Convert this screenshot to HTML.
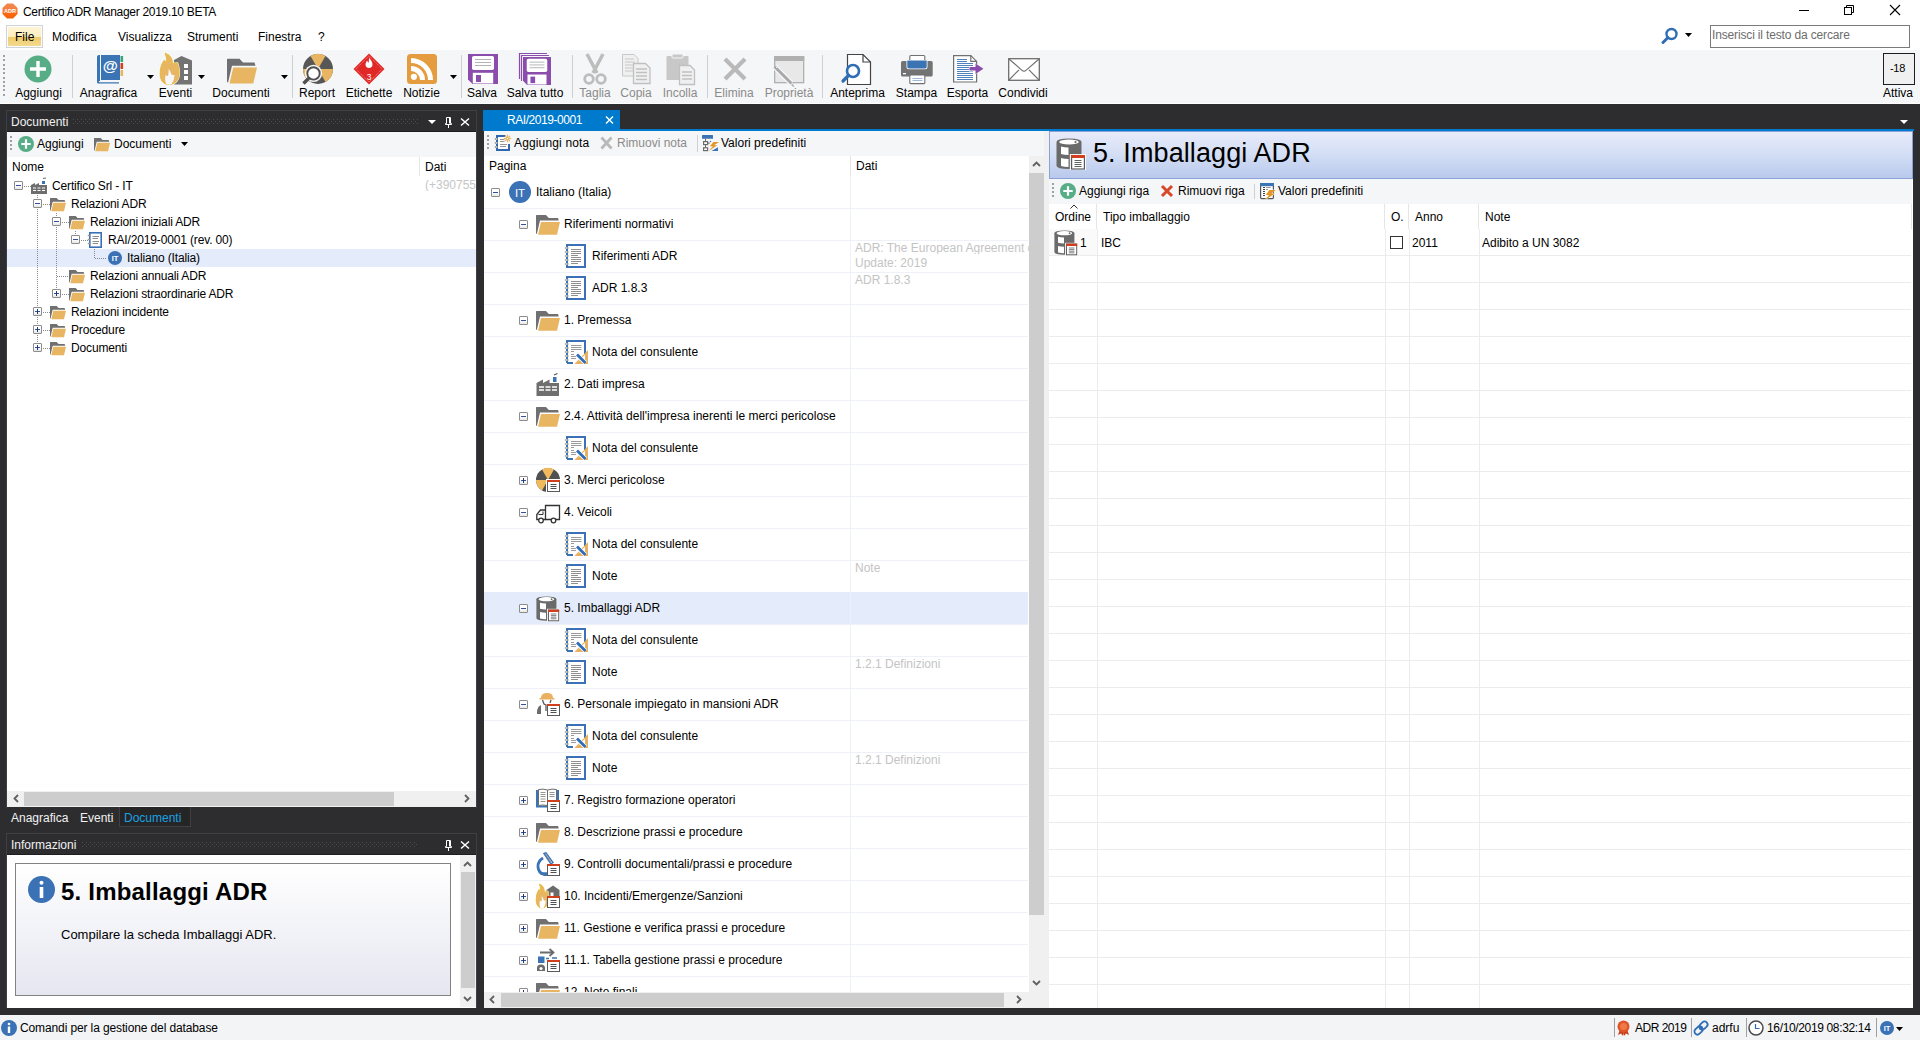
<!DOCTYPE html>
<html><head><meta charset="utf-8"><title>Certifico ADR Manager</title>
<style>
html,body{margin:0;padding:0}
body{width:1920px;height:1040px;overflow:hidden;position:relative;background:#2d2d30;font-family:"Liberation Sans",sans-serif;font-size:12px}
body div,body svg,body span{position:absolute;box-sizing:content-box}
.t{white-space:nowrap;line-height:1}
svg{overflow:visible}
</style></head><body>
<svg width="0" height="0" style="left:0;top:0"><defs></defs></svg>
<div style="left:0px;top:0px;width:1920px;height:50px;background:#fff"></div>
<svg style="left:2px;top:3px" width="16" height="16" viewBox="0 0 16 16"><defs><linearGradient id="ag" x1="0" y1="0" x2="0" y2="1"><stop offset="0" stop-color="#f08a50"/><stop offset="0.55" stop-color="#f47a3a"/><stop offset="0.6" stop-color="#ff6a10"/><stop offset="1" stop-color="#f06208"/></linearGradient></defs><polygon points="5,0.5 11,0.5 15.5,5 15.5,11 11,15.5 5,15.5 0.5,11 0.5,5" fill="url(#ag)"/><text x="8" y="10" font-size="5.5" font-family="Liberation Sans" font-weight="700" fill="#fff" text-anchor="middle">ADR</text></svg>
<span class="t" style="left:23px;top:5.84px;font-size:12px;color:#000;font-weight:400;letter-spacing:-0.3px">Certifico ADR Manager 2019.10 BETA</span>
<div style="left:1799px;top:10px;width:10px;height:1px;background:#000"></div>
<svg style="left:1843px;top:4px" width="12" height="12" viewBox="0 0 12 12"><rect x="1.5" y="3.5" width="7" height="7" fill="none" stroke="#000"/><path d="M3.5 3.5V1.5H10.5V8.5H8.5" fill="none" stroke="#000"/></svg>
<svg style="left:1889px;top:4px" width="12" height="12" viewBox="0 0 12 12"><path d="M1 1L11 11M11 1L1 11" stroke="#000" stroke-width="1.1"/></svg>
<div style="left:6px;top:25px;width:35px;height:21px;border:1px solid #d0d3d7;box-shadow:inset 0 0 0 1px #fbfcfd;background:linear-gradient(#fef6d8,#fbedbd 52%,#eecb6b 54%,#f4dc94)"></div>
<span class="t" style="left:15px;top:30.84px;font-size:12px;color:#000;font-weight:400;">File</span>
<span class="t" style="left:52px;top:30.84px;font-size:12px;color:#000;font-weight:400;">Modifica</span>
<span class="t" style="left:118px;top:30.84px;font-size:12px;color:#000;font-weight:400;">Visualizza</span>
<span class="t" style="left:187px;top:30.84px;font-size:12px;color:#000;font-weight:400;">Strumenti</span>
<span class="t" style="left:258px;top:30.84px;font-size:12px;color:#000;font-weight:400;">Finestra</span>
<span class="t" style="left:318px;top:30.84px;font-size:12px;color:#000;font-weight:400;">?</span>
<svg style="left:1661px;top:27px" width="18" height="18" viewBox="0 0 18 18"><circle cx="10.5" cy="7" r="5" fill="none" stroke="#2f6db5" stroke-width="2.4"/><path d="M7 10.5L2 15.5" stroke="#2f6db5" stroke-width="3" stroke-linecap="round"/></svg>
<svg style="left:1685px;top:33px" width="7" height="5" viewBox="0 0 7 5"><path d="M0 0H7L3.5 4Z" fill="#000"/></svg>
<div style="left:1710px;top:25px;width:198px;height:21px;border:1px solid #7a7a7a;background:#fff"></div>
<span class="t" style="left:1712px;top:28.84px;font-size:12px;color:#6d6d6d;font-weight:400;letter-spacing:-0.15px">Inserisci il testo da cercare</span>
<div style="left:0px;top:50px;width:1920px;height:53px;background:#f5f6f7"></div>
<div style="left:0px;top:103px;width:1920px;height:1px;background:#fff"></div>
<div style="left:3px;top:55.0px;width:2px;height:2px;background:#a0a0a0"></div>
<div style="left:3px;top:59.3px;width:2px;height:2px;background:#a0a0a0"></div>
<div style="left:3px;top:63.6px;width:2px;height:2px;background:#a0a0a0"></div>
<div style="left:3px;top:67.9px;width:2px;height:2px;background:#a0a0a0"></div>
<div style="left:3px;top:72.2px;width:2px;height:2px;background:#a0a0a0"></div>
<div style="left:3px;top:76.5px;width:2px;height:2px;background:#a0a0a0"></div>
<div style="left:3px;top:80.8px;width:2px;height:2px;background:#a0a0a0"></div>
<div style="left:3px;top:85.1px;width:2px;height:2px;background:#a0a0a0"></div>
<div style="left:3px;top:89.4px;width:2px;height:2px;background:#a0a0a0"></div>
<div style="left:3px;top:93.69999999999999px;width:2px;height:2px;background:#a0a0a0"></div>
<svg style="left:24px;top:55px" width="28" height="28" viewBox="0 0 28 28"><circle cx="14" cy="14" r="13.5" fill="#57ad86"/><path d="M14 6V22M6 14H22" stroke="#fff" stroke-width="3.4"/></svg>
<span class="t" style="left:-21.5px;width:120px;text-align:center;top:86.84px;font-size:12px;color:#000">Aggiungi</span>
<div style="left:72px;top:55px;width:1px;height:43px;background:#cdd0d4"></div>
<svg style="left:96px;top:54px" width="30" height="32" viewBox="0 0 30 32"><path d="M1 3Q1 1 3 1H4V27H1Z" fill="#3b74b4"/><rect x="5" y="1" width="19" height="25" fill="#3b74b4"/><path d="M1 26V28Q1 29.5 2.5 29.5H23V28.3H4Q2.8 28.3 2.8 27.5V26Z" fill="#3b74b4"/><rect x="24.5" y="2" width="2.6" height="6" fill="#3aa57a"/><rect x="24.5" y="9" width="2.6" height="6" fill="#d9401e"/><rect x="24.5" y="16" width="2.6" height="6" fill="#e8b562"/><text x="14.3" y="17" font-size="15.5" font-family="Liberation Sans" font-weight="700" fill="#fff" text-anchor="middle">@</text></svg>
<span class="t" style="left:48.5px;width:120px;text-align:center;top:86.84px;font-size:12px;color:#000">Anagrafica</span>
<svg style="left:147px;top:75px" width="7" height="4" viewBox="0 0 7 4"><path d="M0 0H7L3.5 4Z" fill="#000"/></svg>
<svg style="left:156px;top:50px" width="40" height="38" viewBox="0 0 40 38"><path d="M18 10L25.5 6L36 10.5V34.5H18Z" fill="#737373"/><rect x="28" y="14" width="4" height="4" fill="#fff"/><rect x="28" y="20" width="4" height="4" fill="#fff"/><rect x="28" y="26" width="4" height="4" fill="#fff"/><path d="M9 3Q17 6 16.5 13.5Q19 13 21.5 13Q24 20 23 26Q22 32 15.5 34.5L10.5 34.5Q4 32 4 24Q4 15 8.5 10Q9.5 12 10.5 12.5Q11 8 9 3Z" fill="#e8b562" stroke="#f5f6f7" stroke-width="1.6" paint-order="stroke"/><path d="M9 3Q17 6 16.5 13.5Q19 13 21.5 13Q24 20 23 26Q22 32 15.5 34.5L10.5 34.5Q4 32 4 24Q4 15 8.5 10Q9.5 12 10.5 12.5Q11 8 9 3Z" fill="#e8b562" stroke="#e9c020" stroke-width="0.6"/><path d="M12.5 19Q15 21 15.5 24.5Q17 25 18.5 25Q18.5 30 15.5 34.5L10.5 34.5Q8.5 31 9.5 25Q11 26 12 26Q13 22 12.5 19Z" fill="#f5f6f7"/></svg>
<span class="t" style="left:115.5px;width:120px;text-align:center;top:86.84px;font-size:12px;color:#000">Eventi</span>
<svg style="left:198px;top:75px" width="7" height="4" viewBox="0 0 7 4"><path d="M0 0H7L3.5 4Z" fill="#000"/></svg>
<svg style="left:227px;top:55px" width="32" height="30" viewBox="0 0 32 30"><g transform="scale(1.25)"><path d="M0 3.5Q0 3 0.6 3H10L12.8 6H22L22.8 8.6H4L0.9 21.8H0Z" fill="#707070"/><path d="M5 10H24L21 22.8H2Z" fill="#e8b562"/></g></svg>
<span class="t" style="left:181px;width:120px;text-align:center;top:86.84px;font-size:12px;color:#000">Documenti</span>
<svg style="left:281px;top:75px" width="7" height="4" viewBox="0 0 7 4"><path d="M0 0H7L3.5 4Z" fill="#000"/></svg>
<div style="left:292px;top:55px;width:1px;height:43px;background:#cdd0d4"></div>
<svg style="left:302px;top:54px" width="32" height="32" viewBox="0 0 32 32"><circle cx="16" cy="15" r="15" fill="#575757"/><path d="M16 15L8.5 2A15 15 0 0 1 23.5 2Z" fill="#e8b562"/><path d="M16 15L31 15A15 15 0 0 1 23.5 28Z" fill="#e8b562"/><path d="M16 15L8.5 28A15 15 0 0 1 1 15Z" fill="#e8b562"/><circle cx="11.5" cy="19.4" r="8.6" fill="#f5f6f7"/><circle cx="11.5" cy="19.4" r="6.2" fill="#fff" stroke="#505050" stroke-width="1.9"/><path d="M6.8 24.2L1.5 29.5" stroke="#505050" stroke-width="3.4"/></svg>
<span class="t" style="left:257px;width:120px;text-align:center;top:86.84px;font-size:12px;color:#000">Report</span>
<svg style="left:353px;top:53px" width="32" height="32" viewBox="0 0 32 32"><path d="M16 0.5L31.5 16L16 31.5L0.5 16Z" fill="#e02826"/><path d="M16 2.8L29.2 16L16 29.2L2.8 16Z" fill="none" stroke="#fff" stroke-width="0.6" stroke-dasharray="1 1" opacity="0.8"/><path d="M16 4.5C17.5 7 19.5 8.5 19.5 11.5C19.5 13.5 18 15 16 15C14 15 12.5 13.5 12.5 11.5C12.5 10 13.5 9 14 7.5C14.8 8.5 15 9.5 15.3 10C16 8.5 16 6.5 16 4.5Z" fill="#fff"/><text x="16" y="27" font-size="8.5" font-family="Liberation Sans" fill="#fff" text-anchor="middle">3</text></svg>
<span class="t" style="left:309px;width:120px;text-align:center;top:86.84px;font-size:12px;color:#000">Etichette</span>
<svg style="left:407px;top:54px" width="30" height="30" viewBox="0 0 30 30"><rect x="0" y="0" width="30" height="30" rx="3.5" fill="#e59c3f"/><circle cx="6.9" cy="22.8" r="3.1" fill="#fff"/><path d="M4 12A14 14 0 0 1 18 26H13A9 9 0 0 0 4 17Z" fill="#fff"/><path d="M4 4A22 22 0 0 1 26 26H21A17 17 0 0 0 4 9Z" fill="#fff"/></svg>
<span class="t" style="left:361.5px;width:120px;text-align:center;top:86.84px;font-size:12px;color:#000">Notizie</span>
<svg style="left:450px;top:75px" width="7" height="4" viewBox="0 0 7 4"><path d="M0 0H7L3.5 4Z" fill="#000"/></svg>
<div style="left:461px;top:55px;width:1px;height:43px;background:#cdd0d4"></div>
<svg style="left:468px;top:54px" width="30" height="30" viewBox="0 0 30 30"><path d="M0 0H30V30H4.5L0 25.5Z" fill="#8a4dab"/><rect x="4" y="2" width="22" height="14" rx="1.8" fill="#fff"/><path d="M7 5.5H23M7 8.5H23M7 11.5H23" stroke="#b3b3b3" stroke-width="1"/><rect x="4.8" y="18.8" width="20.4" height="10.7" fill="#fff"/><rect x="8" y="21" width="5" height="7" fill="#8a4dab"/></svg>
<span class="t" style="left:422px;width:120px;text-align:center;top:86.84px;font-size:12px;color:#000">Salva</span>
<svg style="left:514px;top:50px" width="40" height="38" viewBox="0 0 40 38"><path d="M5.5 28.5V3.5H32.5" fill="none" stroke="#8a4dab" stroke-width="1.2" stroke-linecap="round"/><path d="M7.5 30.5V5.5H34.5" fill="none" stroke="#8a4dab" stroke-width="1.2" stroke-linecap="round"/><g transform="translate(9,7) scale(0.933)"><path d="M0 0H30V30H4.5L0 25.5Z" fill="#8a4dab"/><rect x="4" y="2" width="22" height="14" rx="1.8" fill="#fff"/><path d="M7 5.5H23M7 8.5H23M7 11.5H23" stroke="#b3b3b3" stroke-width="1"/><rect x="4.8" y="18.8" width="20.4" height="10.7" fill="#fff"/><rect x="8" y="21" width="5" height="7" fill="#8a4dab"/></g></svg>
<span class="t" style="left:475px;width:120px;text-align:center;top:86.84px;font-size:12px;color:#000">Salva tutto</span>
<div style="left:572px;top:55px;width:1px;height:43px;background:#cdd0d4"></div>
<svg style="left:584px;top:54px" width="22" height="31" viewBox="0 0 22 31"><path d="M3 0L13 19M19 0L9 19" stroke="#bdbdbd" stroke-width="3.5"/><circle cx="5" cy="25" r="4.3" fill="none" stroke="#bdbdbd" stroke-width="2.8"/><circle cx="17" cy="25" r="4.3" fill="none" stroke="#bdbdbd" stroke-width="2.8"/></svg>
<span class="t" style="left:535px;width:120px;text-align:center;top:86.84px;font-size:12px;color:#8b8b8b">Taglia</span>
<svg style="left:622px;top:54px" width="30" height="30" viewBox="0 0 30 30"><path d="M0.5 0.5H12L16 4.5V22H0.5Z" fill="#f0f0f0" stroke="#c8c8c8"/><path d="M3 5H12M3 8H13M3 11H13M3 14H13M3 17H13" stroke="#c8c8c8"/><path d="M11.5 9.5H23.5L28 14V29.5H11.5Z" fill="#f0f0f0" stroke="#c0c0c0" stroke-width="1.3"/><path d="M14 15H25M14 18.5H25M14 22H25M14 25.5H25" stroke="#c0c0c0" stroke-width="1.3"/></svg>
<span class="t" style="left:576px;width:120px;text-align:center;top:86.84px;font-size:12px;color:#8b8b8b">Copia</span>
<svg style="left:666px;top:53px" width="30" height="32" viewBox="0 0 30 32"><rect x="0.5" y="3" width="22" height="24" rx="1" fill="#c8c8c8"/><rect x="6" y="1" width="11" height="4" rx="1" fill="#c8c8c8" stroke="#f5f6f7" stroke-width="1"/><path d="M13.5 12.5H24L28.5 17V31.5H13.5Z" fill="#f0f0f0" stroke="#c0c0c0" stroke-width="1.3"/><path d="M16 19H26M16 22.5H26M16 26H26" stroke="#c0c0c0" stroke-width="1.3"/></svg>
<span class="t" style="left:620px;width:120px;text-align:center;top:86.84px;font-size:12px;color:#8b8b8b">Incolla</span>
<div style="left:707px;top:55px;width:1px;height:43px;background:#cdd0d4"></div>
<svg style="left:723px;top:57px" width="24" height="24" viewBox="0 0 24 24"><path d="M2 2L22 22M22 2L2 22" stroke="#b9b9b9" stroke-width="4.2"/></svg>
<span class="t" style="left:674px;width:120px;text-align:center;top:86.84px;font-size:12px;color:#8b8b8b">Elimina</span>
<svg style="left:772px;top:54px" width="34" height="34" viewBox="0 0 34 34"><rect x="2.7" y="2.7" width="29" height="26" fill="#e8e8e8" stroke="#ababab" stroke-width="1.2"/><rect x="2.2" y="2.2" width="30" height="4.8" fill="#b0b0b0"/><path d="M2.5 12.5L19.5 29.5" stroke="#f5f6f7" stroke-width="5.5"/><path d="M2.5 12.5L19.5 29.5" stroke="#a8a8a8" stroke-width="3"/><path d="M4 14L5.5 12.5" stroke="#f5f6f7" stroke-width="1"/><path d="M19 31L22.5 33.5L21 30Z" fill="#a8a8a8"/></svg>
<span class="t" style="left:729px;width:120px;text-align:center;top:86.84px;font-size:12px;color:#8b8b8b">Proprietà</span>
<div style="left:822px;top:55px;width:1px;height:43px;background:#cdd0d4"></div>
<svg style="left:840px;top:53px" width="32" height="33" viewBox="0 0 32 33"><path d="M7.5 1.5H23L30.5 9V31.5H7.5Z" fill="#fff" stroke="#444" stroke-width="1.2"/><path d="M23 1.5V9H30.5" fill="none" stroke="#444" stroke-width="1.2"/><circle cx="13" cy="18" r="6" fill="#fff" stroke="#2f6db5" stroke-width="2.6"/><path d="M8.5 22.5L3 28" stroke="#2f6db5" stroke-width="3.2" stroke-linecap="round"/></svg>
<span class="t" style="left:797.5px;width:120px;text-align:center;top:86.84px;font-size:12px;color:#000">Anteprima</span>
<svg style="left:900px;top:54px" width="34" height="31" viewBox="0 0 34 31"><rect x="9.8" y="1.5" width="15" height="8" rx="1" fill="#fff" stroke="#707070" stroke-width="1.1"/><rect x="1" y="7" width="31.7" height="15.6" rx="1.6" fill="#737373"/><path d="M6.5 6H27.5V13Q27.5 15.3 25.2 15.3H8.8Q6.5 15.3 6.5 13Z" fill="#fff"/><path d="M7.3 6.5H26.7V12.8Q26.7 14.5 25 14.5H9Q7.3 14.5 7.3 12.8Z" fill="#3b74b4"/><rect x="3" y="19" width="3" height="1.3" fill="#fff"/><rect x="9.8" y="21" width="15" height="8.6" rx="0.8" fill="#fff" stroke="#707070" stroke-width="1.1"/><path d="M12.5 24.5H22.5M12.5 26.5H22.5" stroke="#8fb0d8" stroke-width="0.9"/></svg>
<span class="t" style="left:856.5px;width:120px;text-align:center;top:86.84px;font-size:12px;color:#000">Stampa</span>
<svg style="left:952px;top:54px" width="34" height="31" viewBox="0 0 34 31"><path d="M1.6 1.6H18.8L24.6 7.4V28H1.6Z" fill="#fff" stroke="#707070" stroke-width="1.2"/><path d="M18.8 1.6V7.4H24.6" fill="none" stroke="#707070" stroke-width="1.2"/><path d="M5 5.5H15M5 7.5H15M5 9.5H21M5 11.5H21M5 13.5H21M5 15.5H21M5 17.5H21M5 19.5H21M5 21.5H21M5 23.5H21M5 25.5H21" stroke="#3b74b4" stroke-width="0.9"/><path d="M17 12.2H23V9L32.5 14.8L23 20.5V17.5H17Z" fill="#fff"/><path d="M17.5 13H23.5V9.5L31.5 14.8L23.5 20V16.5H17.5Z" fill="#8a4dab"/></svg>
<span class="t" style="left:907.5px;width:120px;text-align:center;top:86.84px;font-size:12px;color:#000">Esporta</span>
<svg style="left:1007px;top:57px" width="34" height="26" viewBox="0 0 34 26"><rect x="1.7" y="1.7" width="30.6" height="21.6" fill="#fff" stroke="#6e6e6e" stroke-width="1.3"/><path d="M2 2L15 13.3Q17 15 19 13.3L32 2M2 23L12 12.8M32 23L22 12.8" fill="none" stroke="#6e6e6e" stroke-width="1.1"/></svg>
<span class="t" style="left:963px;width:120px;text-align:center;top:86.84px;font-size:12px;color:#000">Condividi</span>
<div style="left:1883px;top:53px;width:30px;height:30px;border:1px solid #1e1e1e;background:#f0f0f0"></div>
<span class="t" style="left:1890px;top:62.69px;font-size:11px;color:#000;font-weight:400;letter-spacing:-0.3px">-18</span>
<span class="t" style="left:1838px;width:120px;text-align:center;top:86.84px;font-size:12px;color:#000">Attiva</span>
<div style="left:0px;top:104px;width:1920px;height:911px;background:#2d2d30"></div>
<div style="left:6px;top:110px;width:469px;height:21px;border:1px solid #3f3f46;border-bottom:none;background:#2d2d30"></div>
<span class="t" style="left:11px;top:115.84px;font-size:12px;color:#f1f1f1;font-weight:400;">Documenti</span>
<div style="left:73px;top:119px;width:345px;height:1px;background:repeating-linear-gradient(to right,transparent 0 0px,#4c4c51 0px 1px,transparent 1px 4px)"></div>
<div style="left:73px;top:121px;width:345px;height:1px;background:repeating-linear-gradient(to right,transparent 0 2px,#4c4c51 2px 3px,transparent 3px 4px)"></div>
<div style="left:73px;top:123px;width:345px;height:1px;background:repeating-linear-gradient(to right,transparent 0 0px,#4c4c51 0px 1px,transparent 1px 4px)"></div>
<svg style="left:428px;top:120px" width="8" height="4" viewBox="0 0 8 4"><path d="M0 0H8L4 4Z" fill="#fff"/></svg>
<svg style="left:445px;top:117px" width="7" height="11" viewBox="0 0 7 11"><path d="M1.5 0.5H5.5V6.5H6.5V7.5H0.5V6.5H1.5Z" fill="none" stroke="#fff"/><path d="M3.5 7.5V11" stroke="#fff"/><path d="M4.5 1V6.5" stroke="#fff"/></svg>
<svg style="left:460px;top:118px" width="10" height="8" viewBox="0 0 10 8"><path d="M1 0.5L9 7.5M9 0.5L1 7.5" stroke="#fff" stroke-width="1.5"/></svg>
<div style="left:6px;top:131px;width:1px;height:677px;background:#3f3f46"></div>
<div style="left:476px;top:131px;width:1px;height:677px;background:#3f3f46"></div>
<div style="left:7px;top:131px;width:469px;height:1px;background:#1e1e20"></div>
<div style="left:7px;top:132px;width:469px;height:675px;background:#fff"></div>
<div style="left:7px;top:132px;width:469px;height:25px;background:#f5f6f7"></div>
<div style="left:10px;top:136px;width:2px;height:2px;background:#a0a0a0"></div>
<div style="left:10px;top:140px;width:2px;height:2px;background:#a0a0a0"></div>
<div style="left:10px;top:144px;width:2px;height:2px;background:#a0a0a0"></div>
<div style="left:10px;top:148px;width:2px;height:2px;background:#a0a0a0"></div>
<svg style="left:18px;top:136px" width="16" height="16" viewBox="0 0 16 16"><circle cx="8" cy="8" r="8" fill="#57ad86"/><path d="M8 3.3V12.7M3.3 8H12.7" stroke="#fff" stroke-width="2.2"/></svg>
<span class="t" style="left:37px;top:137.84px;font-size:12px;color:#000;font-weight:400;">Aggiungi</span>
<svg style="left:94px;top:136px" width="16" height="16" viewBox="0 0 16 16"><g transform="translate(0,0) scale(0.667)"><path d="M0 3.5Q0 3 0.6 3H10L12.8 6H22L22.8 8.6H4L0.9 21.8H0Z" fill="#707070"/><path d="M5 10H24L21 22.8H2Z" fill="#e8b562"/></g></svg>
<span class="t" style="left:114px;top:137.84px;font-size:12px;color:#000;font-weight:400;">Documenti</span>
<svg style="left:181px;top:142px" width="7" height="4" viewBox="0 0 7 4"><path d="M0 0H7L3.5 4Z" fill="#000"/></svg>
<span class="t" style="left:12px;top:160.84px;font-size:12px;color:#000;font-weight:400;">Nome</span>
<div style="left:419px;top:157px;width:1px;height:19px;background:#e5e5e5"></div>
<span class="t" style="left:425px;top:160.84px;font-size:12px;color:#000;font-weight:400;">Dati</span>
<div style="left:7px;top:249px;width:469px;height:18px;background:#e4ebfa"></div>
<div style="left:37px;top:195px;width:1px;height:153px;background:repeating-linear-gradient(to bottom,#8a8a8a 0 1px,transparent 1px 2px)"></div>
<div style="left:56px;top:213px;width:1px;height:81px;background:repeating-linear-gradient(to bottom,#8a8a8a 0 1px,transparent 1px 2px)"></div>
<div style="left:75px;top:231px;width:1px;height:9px;background:repeating-linear-gradient(to bottom,#8a8a8a 0 1px,transparent 1px 2px)"></div>
<div style="left:94px;top:249px;width:1px;height:9px;background:repeating-linear-gradient(to bottom,#8a8a8a 0 1px,transparent 1px 2px)"></div>
<div style="left:14px;top:181px;width:7px;height:7px;border:1px solid #8c8c8c;border-radius:1px;background:linear-gradient(#fff,#fff 50%,#e6e6e6)"></div>
<div style="left:16px;top:185px;width:5px;height:1px;background:#3050a0"></div>
<div style="left:24px;top:186px;width:7px;height:1px;background:repeating-linear-gradient(to right,#8a8a8a 0 1px,transparent 1px 2px)"></div>
<svg style="left:31px;top:178px" width="16" height="16" viewBox="0 0 16 16"><path d="M0 7L4 5V7L8 5V7H16V16H0Z" fill="#6e6e6e"/><rect x="11" y="3" width="3" height="3" fill="#3a72b5"/><path d="M12 0.5L15 0" stroke="#6e6e6e" stroke-width="1.2"/><path d="M2 10H5M6.5 10H9.5M11 10H14M2 12.5H5M6.5 12.5H9.5M11 12.5H14" stroke="#fff" stroke-width="1.2"/></svg>
<span class="t" style="left:52px;top:179.84px;font-size:12px;color:#000;font-weight:400;letter-spacing:-0.15px">Certifico Srl - IT</span>
<div style="left:33px;top:199px;width:7px;height:7px;border:1px solid #8c8c8c;border-radius:1px;background:linear-gradient(#fff,#fff 50%,#e6e6e6)"></div>
<div style="left:35px;top:203px;width:5px;height:1px;background:#3050a0"></div>
<div style="left:43px;top:204px;width:7px;height:1px;background:repeating-linear-gradient(to right,#8a8a8a 0 1px,transparent 1px 2px)"></div>
<svg style="left:50px;top:196px" width="16" height="16" viewBox="0 0 16 16"><g transform="translate(0,0) scale(0.667)"><path d="M0 3.5Q0 3 0.6 3H10L12.8 6H22L22.8 8.6H4L0.9 21.8H0Z" fill="#707070"/><path d="M5 10H24L21 22.8H2Z" fill="#e8b562"/></g></svg>
<span class="t" style="left:71px;top:197.84px;font-size:12px;color:#000;font-weight:400;letter-spacing:-0.15px">Relazioni ADR</span>
<div style="left:52px;top:217px;width:7px;height:7px;border:1px solid #8c8c8c;border-radius:1px;background:linear-gradient(#fff,#fff 50%,#e6e6e6)"></div>
<div style="left:54px;top:221px;width:5px;height:1px;background:#3050a0"></div>
<div style="left:62px;top:222px;width:7px;height:1px;background:repeating-linear-gradient(to right,#8a8a8a 0 1px,transparent 1px 2px)"></div>
<svg style="left:69px;top:214px" width="16" height="16" viewBox="0 0 16 16"><g transform="translate(0,0) scale(0.667)"><path d="M0 3.5Q0 3 0.6 3H10L12.8 6H22L22.8 8.6H4L0.9 21.8H0Z" fill="#707070"/><path d="M5 10H24L21 22.8H2Z" fill="#e8b562"/></g></svg>
<span class="t" style="left:90px;top:215.84px;font-size:12px;color:#000;font-weight:400;letter-spacing:-0.15px">Relazioni iniziali ADR</span>
<div style="left:71px;top:235px;width:7px;height:7px;border:1px solid #8c8c8c;border-radius:1px;background:linear-gradient(#fff,#fff 50%,#e6e6e6)"></div>
<div style="left:73px;top:239px;width:5px;height:1px;background:#3050a0"></div>
<div style="left:81px;top:240px;width:7px;height:1px;background:repeating-linear-gradient(to right,#8a8a8a 0 1px,transparent 1px 2px)"></div>
<svg style="left:87px;top:232px" width="15" height="16" viewBox="0 0 15 16"><rect x="2.8" y="0.8" width="11.4" height="14.4" fill="#fff" stroke="#3a72b5" stroke-width="1.6"/><path d="M5.5 4.5H12M5.5 6.5H11M5.5 9.5H12M5.5 11.5H11" stroke="#808080" stroke-width="0.9"/><path d="M0.8 3.5H3.8M0.8 7.5H3.8M0.8 11.5H3.8" stroke="#9a9a9a" stroke-width="1.3"/></svg>
<span class="t" style="left:108px;top:233.84px;font-size:12px;color:#000;font-weight:400;letter-spacing:-0.15px">RAI/2019-0001 (rev. 00)</span>
<div style="left:95px;top:258px;width:11px;height:1px;background:repeating-linear-gradient(to right,#8a8a8a 0 1px,transparent 1px 2px)"></div>
<svg style="left:108px;top:251px" width="14" height="14" viewBox="0 0 14 14"><circle cx="7.0" cy="7.0" r="7.0" fill="#3a72b5"/><text x="7.0" y="9.85" font-size="7.5" font-family="Liberation Sans" fill="#fff" text-anchor="middle" font-weight="700">IT</text></svg>
<span class="t" style="left:127px;top:251.84px;font-size:12px;color:#000;font-weight:400;letter-spacing:-0.15px">Italiano (Italia)</span>
<div style="left:57px;top:276px;width:12px;height:1px;background:repeating-linear-gradient(to right,#8a8a8a 0 1px,transparent 1px 2px)"></div>
<svg style="left:69px;top:268px" width="16" height="16" viewBox="0 0 16 16"><g transform="translate(0,0) scale(0.667)"><path d="M0 3.5Q0 3 0.6 3H10L12.8 6H22L22.8 8.6H4L0.9 21.8H0Z" fill="#707070"/><path d="M5 10H24L21 22.8H2Z" fill="#e8b562"/></g></svg>
<span class="t" style="left:90px;top:269.84px;font-size:12px;color:#000;font-weight:400;letter-spacing:-0.15px">Relazioni annuali ADR</span>
<div style="left:52px;top:289px;width:7px;height:7px;border:1px solid #8c8c8c;border-radius:1px;background:linear-gradient(#fff,#fff 50%,#e6e6e6)"></div>
<div style="left:54px;top:293px;width:5px;height:1px;background:#3050a0"></div>
<div style="left:56px;top:291px;width:1px;height:5px;background:#1e3a78"></div>
<div style="left:62px;top:294px;width:7px;height:1px;background:repeating-linear-gradient(to right,#8a8a8a 0 1px,transparent 1px 2px)"></div>
<svg style="left:69px;top:286px" width="16" height="16" viewBox="0 0 16 16"><g transform="translate(0,0) scale(0.667)"><path d="M0 3.5Q0 3 0.6 3H10L12.8 6H22L22.8 8.6H4L0.9 21.8H0Z" fill="#707070"/><path d="M5 10H24L21 22.8H2Z" fill="#e8b562"/></g></svg>
<span class="t" style="left:90px;top:287.84px;font-size:12px;color:#000;font-weight:400;letter-spacing:-0.15px">Relazioni straordinarie ADR</span>
<div style="left:33px;top:307px;width:7px;height:7px;border:1px solid #8c8c8c;border-radius:1px;background:linear-gradient(#fff,#fff 50%,#e6e6e6)"></div>
<div style="left:35px;top:311px;width:5px;height:1px;background:#3050a0"></div>
<div style="left:37px;top:309px;width:1px;height:5px;background:#1e3a78"></div>
<div style="left:43px;top:312px;width:7px;height:1px;background:repeating-linear-gradient(to right,#8a8a8a 0 1px,transparent 1px 2px)"></div>
<svg style="left:50px;top:304px" width="16" height="16" viewBox="0 0 16 16"><g transform="translate(0,0) scale(0.667)"><path d="M0 3.5Q0 3 0.6 3H10L12.8 6H22L22.8 8.6H4L0.9 21.8H0Z" fill="#707070"/><path d="M5 10H24L21 22.8H2Z" fill="#e8b562"/></g></svg>
<span class="t" style="left:71px;top:305.84px;font-size:12px;color:#000;font-weight:400;letter-spacing:-0.15px">Relazioni incidente</span>
<div style="left:33px;top:325px;width:7px;height:7px;border:1px solid #8c8c8c;border-radius:1px;background:linear-gradient(#fff,#fff 50%,#e6e6e6)"></div>
<div style="left:35px;top:329px;width:5px;height:1px;background:#3050a0"></div>
<div style="left:37px;top:327px;width:1px;height:5px;background:#1e3a78"></div>
<div style="left:43px;top:330px;width:7px;height:1px;background:repeating-linear-gradient(to right,#8a8a8a 0 1px,transparent 1px 2px)"></div>
<svg style="left:50px;top:322px" width="16" height="16" viewBox="0 0 16 16"><g transform="translate(0,0) scale(0.667)"><path d="M0 3.5Q0 3 0.6 3H10L12.8 6H22L22.8 8.6H4L0.9 21.8H0Z" fill="#707070"/><path d="M5 10H24L21 22.8H2Z" fill="#e8b562"/></g></svg>
<span class="t" style="left:71px;top:323.84px;font-size:12px;color:#000;font-weight:400;letter-spacing:-0.15px">Procedure</span>
<div style="left:33px;top:343px;width:7px;height:7px;border:1px solid #8c8c8c;border-radius:1px;background:linear-gradient(#fff,#fff 50%,#e6e6e6)"></div>
<div style="left:35px;top:347px;width:5px;height:1px;background:#3050a0"></div>
<div style="left:37px;top:345px;width:1px;height:5px;background:#1e3a78"></div>
<div style="left:43px;top:348px;width:7px;height:1px;background:repeating-linear-gradient(to right,#8a8a8a 0 1px,transparent 1px 2px)"></div>
<svg style="left:50px;top:340px" width="16" height="16" viewBox="0 0 16 16"><g transform="translate(0,0) scale(0.667)"><path d="M0 3.5Q0 3 0.6 3H10L12.8 6H22L22.8 8.6H4L0.9 21.8H0Z" fill="#707070"/><path d="M5 10H24L21 22.8H2Z" fill="#e8b562"/></g></svg>
<span class="t" style="left:71px;top:341.84px;font-size:12px;color:#000;font-weight:400;letter-spacing:-0.15px">Documenti</span>
<span class="t" style="left:425px;top:178.84px;width:51px;overflow:hidden;font-size:12px;color:#c6c6c6">(+3907559</span>
<div style="left:7px;top:791px;width:469px;height:16px;background:#f0f0f0"></div>
<div style="left:24px;top:792px;width:370px;height:14px;background:#cdcdcd"></div>
<svg style="left:13px;top:794px" width="6" height="9" viewBox="0 0 6 9"><path d="M5 1L1.5 4.5L5 8" fill="none" stroke="#606060" stroke-width="1.8"/></svg>
<svg style="left:464px;top:794px" width="6" height="9" viewBox="0 0 6 9"><path d="M1 1L4.5 4.5L1 8" fill="none" stroke="#606060" stroke-width="1.8"/></svg>
<div style="left:119px;top:807px;width:70px;height:19px;border:1px solid #3f3f46;border-top:none;background:#252526"></div>
<span class="t" style="left:11px;top:811.84px;font-size:12px;color:#f1f1f1;font-weight:400;">Anagrafica</span>
<span class="t" style="left:80px;top:811.84px;font-size:12px;color:#f1f1f1;font-weight:400;">Eventi</span>
<span class="t" style="left:124px;top:811.84px;font-size:12px;color:#1ba1e2;font-weight:400;">Documenti</span>
<div style="left:6px;top:833px;width:469px;height:21px;border:1px solid #3f3f46;border-bottom:none;background:#2d2d30"></div>
<span class="t" style="left:11px;top:838.84px;font-size:12px;color:#f1f1f1;font-weight:400;">Informazioni</span>
<div style="left:82px;top:842px;width:336px;height:1px;background:repeating-linear-gradient(to right,transparent 0 0px,#4c4c51 0px 1px,transparent 1px 4px)"></div>
<div style="left:82px;top:844px;width:336px;height:1px;background:repeating-linear-gradient(to right,transparent 0 2px,#4c4c51 2px 3px,transparent 3px 4px)"></div>
<div style="left:82px;top:846px;width:336px;height:1px;background:repeating-linear-gradient(to right,transparent 0 0px,#4c4c51 0px 1px,transparent 1px 4px)"></div>
<svg style="left:445px;top:840px" width="7" height="11" viewBox="0 0 7 11"><path d="M1.5 0.5H5.5V6.5H6.5V7.5H0.5V6.5H1.5Z" fill="none" stroke="#fff"/><path d="M3.5 7.5V11" stroke="#fff"/><path d="M4.5 1V6.5" stroke="#fff"/></svg>
<svg style="left:460px;top:841px" width="10" height="8" viewBox="0 0 10 8"><path d="M1 0.5L9 7.5M9 0.5L1 7.5" stroke="#fff" stroke-width="1.5"/></svg>
<div style="left:6px;top:854px;width:1px;height:154px;background:#3f3f46"></div>
<div style="left:476px;top:854px;width:1px;height:154px;background:#3f3f46"></div>
<div style="left:7px;top:854px;width:469px;height:1px;background:#1e1e20"></div>
<div style="left:7px;top:855px;width:469px;height:153px;background:#fff"></div>
<div style="left:15px;top:863px;width:434px;height:131px;border:1px solid #828282;background:linear-gradient(#fff,#e5e6f0)"></div>
<svg style="left:28px;top:876px" width="27" height="27" viewBox="0 0 27 27"><circle cx="13.5" cy="13.5" r="13.5" fill="#3a72b5"/><rect x="11.7" y="11" width="3.6" height="11" fill="#fff"/><circle cx="13.5" cy="6.8" r="2" fill="#fff"/></svg>
<span class="t" style="left:61px;top:879.68px;font-size:24px;color:#000;font-weight:700;letter-spacing:0.2px">5. Imballaggi ADR</span>
<span class="t" style="left:61px;top:928.0px;font-size:13px;color:#000;font-weight:400;">Compilare la scheda Imballaggi ADR.</span>
<div style="left:460px;top:855px;width:16px;height:152px;background:#f0f0f0"></div>
<div style="left:461px;top:872px;width:14px;height:116px;background:#cdcdcd"></div>
<svg style="left:463px;top:861px" width="9" height="6" viewBox="0 0 9 6"><path d="M1 5L4.5 1.5L8 5" fill="none" stroke="#606060" stroke-width="1.8"/></svg>
<svg style="left:463px;top:996px" width="9" height="6" viewBox="0 0 9 6"><path d="M1 1L4.5 4.5L8 1" fill="none" stroke="#606060" stroke-width="1.8"/></svg>
<div style="left:483px;top:110px;width:137px;height:19px;background:#007acc"></div>
<span class="t" style="left:507px;top:113.84px;font-size:12px;color:#fff;font-weight:400;letter-spacing:-0.45px">RAI/2019-0001</span>
<svg style="left:605px;top:116px" width="9" height="8" viewBox="0 0 9 8"><path d="M1 0.5L8 7.5M8 0.5L1 7.5" stroke="#fff" stroke-width="1.4"/></svg>
<div style="left:483px;top:129px;width:1431px;height:2px;background:#007acc"></div>
<svg style="left:1900px;top:120px" width="8" height="4" viewBox="0 0 8 4"><path d="M0 0H8L4 4Z" fill="#fff"/></svg>
<div style="left:484px;top:131px;width:1429px;height:877px;background:#fff"></div>
<div style="left:484px;top:131px;width:560px;height:25px;background:#f5f6f7"></div>
<div style="left:487px;top:135px;width:2px;height:2px;background:#a0a0a0"></div>
<div style="left:487px;top:139px;width:2px;height:2px;background:#a0a0a0"></div>
<div style="left:487px;top:143px;width:2px;height:2px;background:#a0a0a0"></div>
<div style="left:487px;top:147px;width:2px;height:2px;background:#a0a0a0"></div>
<svg style="left:494px;top:134px" width="18" height="18" viewBox="0 0 18 18"><path d="M11.5 2H3V16H15V10" fill="#fff" stroke="#3068b0" stroke-width="2"/><path d="M0.8 5H4M0.8 9H4M0.8 13H4" stroke="#8a8a8a" stroke-width="1.4"/><path d="M2 5H3M2 9H3M2 13H3" stroke="#fff" stroke-width="1"/><path d="M6 5.5H10.5M6 7.5H10.5M6 10.5H13M6 12.5H12" stroke="#8a8a8a" stroke-width="0.9"/><path d="M13.5 0.8V8.2M9.8 4.5H17.2M10.9 1.9L16.1 7.1M16.1 1.9L10.9 7.1" stroke="#e8b562" stroke-width="1.2"/><circle cx="13.5" cy="4.5" r="1.8" fill="#e8b562"/><circle cx="13.5" cy="4.5" r="0.7" fill="#fff"/></svg>
<span class="t" style="left:514px;top:136.84px;font-size:12px;color:#000;font-weight:400;letter-spacing:0.15px">Aggiungi nota</span>
<svg style="left:600px;top:136px" width="13" height="14" viewBox="0 0 13 14"><path d="M1.5 1.5L11.5 12.5M11.5 1.5L1.5 12.5" stroke="#b9b9b9" stroke-width="2.8"/></svg>
<span class="t" style="left:617px;top:136.84px;font-size:12px;color:#8b8b8b;font-weight:400;">Rimuovi nota</span>
<div style="left:697px;top:135px;width:1px;height:17px;background:#cdd0d4"></div>
<svg style="left:701px;top:134px" width="18" height="18" viewBox="0 0 18 18"><rect x="1" y="1" width="11" height="3.8" rx="0.5" fill="#3b74b4"/><path d="M4.5 4.8V7.6M4.5 10.6V13.8M6.8 9.1H8.8" stroke="#6b6b6b" stroke-width="1"/><rect x="2.6" y="7.6" width="4" height="3" fill="#fff" stroke="#6b6b6b" stroke-width="1.2"/><rect x="2.6" y="13.8" width="4" height="2.8" fill="#fff" stroke="#6b6b6b" stroke-width="1.2"/><circle cx="9.5" cy="7.5" r="0.7" fill="#3b74b4"/><path d="M10.5 17H17V13.2Z" fill="#3b74b4"/><path d="M18 8H12.5L8.8 12.3H12L7.6 17L16.3 11.3H13Z" fill="#e39422"/></svg>
<span class="t" style="left:721px;top:136.84px;font-size:12px;color:#000;font-weight:400;">Valori predefiniti</span>
<span class="t" style="left:489px;top:159.84px;font-size:12px;color:#000;font-weight:400;">Pagina</span>
<div style="left:850px;top:156px;width:1px;height:20px;background:#e5e5e5"></div>
<span class="t" style="left:856px;top:159.84px;font-size:12px;color:#000;font-weight:400;">Dati</span>
<div style="left:484px;top:208px;width:544px;height:1px;background:#eef2f8"></div>
<div style="left:484px;top:240px;width:544px;height:1px;background:#eef2f8"></div>
<div style="left:484px;top:272px;width:544px;height:1px;background:#eef2f8"></div>
<div style="left:484px;top:304px;width:544px;height:1px;background:#eef2f8"></div>
<div style="left:484px;top:336px;width:544px;height:1px;background:#eef2f8"></div>
<div style="left:484px;top:368px;width:544px;height:1px;background:#eef2f8"></div>
<div style="left:484px;top:400px;width:544px;height:1px;background:#eef2f8"></div>
<div style="left:484px;top:432px;width:544px;height:1px;background:#eef2f8"></div>
<div style="left:484px;top:464px;width:544px;height:1px;background:#eef2f8"></div>
<div style="left:484px;top:496px;width:544px;height:1px;background:#eef2f8"></div>
<div style="left:484px;top:528px;width:544px;height:1px;background:#eef2f8"></div>
<div style="left:484px;top:560px;width:544px;height:1px;background:#eef2f8"></div>
<div style="left:484px;top:592px;width:544px;height:1px;background:#eef2f8"></div>
<div style="left:484px;top:624px;width:544px;height:1px;background:#eef2f8"></div>
<div style="left:484px;top:656px;width:544px;height:1px;background:#eef2f8"></div>
<div style="left:484px;top:688px;width:544px;height:1px;background:#eef2f8"></div>
<div style="left:484px;top:720px;width:544px;height:1px;background:#eef2f8"></div>
<div style="left:484px;top:752px;width:544px;height:1px;background:#eef2f8"></div>
<div style="left:484px;top:784px;width:544px;height:1px;background:#eef2f8"></div>
<div style="left:484px;top:816px;width:544px;height:1px;background:#eef2f8"></div>
<div style="left:484px;top:848px;width:544px;height:1px;background:#eef2f8"></div>
<div style="left:484px;top:880px;width:544px;height:1px;background:#eef2f8"></div>
<div style="left:484px;top:912px;width:544px;height:1px;background:#eef2f8"></div>
<div style="left:484px;top:944px;width:544px;height:1px;background:#eef2f8"></div>
<div style="left:484px;top:976px;width:544px;height:1px;background:#eef2f8"></div>
<div style="left:484px;top:592px;width:544px;height:32px;background:#e4ebfa"></div>
<div style="left:850px;top:176px;width:1px;height:816px;background:#eef2f8"></div>
<div style="left:484px;top:176px;width:545px;height:816px;overflow:hidden">
<div style="left:7px;top:12px;width:7px;height:7px;border:1px solid #8c8c8c;border-radius:1px;background:linear-gradient(#fff,#fff 50%,#e6e6e6)"></div>
<div style="left:9px;top:16px;width:5px;height:1px;background:#3050a0"></div>
<svg style="left:24px;top:4px" width="24" height="24" viewBox="0 0 24 24"><circle cx="12" cy="12" r="11" fill="#3a72b5"/><text x="12" y="16.5" font-size="11.5" font-family="Liberation Sans" fill="#fff" text-anchor="middle">IT</text></svg>
<span class="t" style="left:52px;top:9.84px;font-size:12px;color:#000;font-weight:400;">Italiano (Italia)</span>
<div style="left:35px;top:44px;width:7px;height:7px;border:1px solid #8c8c8c;border-radius:1px;background:linear-gradient(#fff,#fff 50%,#e6e6e6)"></div>
<div style="left:37px;top:48px;width:5px;height:1px;background:#3050a0"></div>
<svg style="left:52px;top:36px" width="24" height="24" viewBox="0 0 24 24"><path d="M0 3.5Q0 3 0.6 3H10L12.8 6H22L22.8 8.6H4L0.9 21.8H0Z" fill="#707070"/><path d="M5 10H24L21 22.8H2Z" fill="#e8b562"/></svg>
<span class="t" style="left:80px;top:41.84px;font-size:12px;color:#000;font-weight:400;">Riferimenti normativi</span>
<svg style="left:80px;top:68px" width="24" height="24" viewBox="0 0 24 24"><rect x="3" y="1" width="18" height="22" fill="#fff" stroke="#3a72b5" stroke-width="2"/><path d="M0.8 4H4.5M0.8 8H4.5M0.8 12H4.5M0.8 16H4.5M0.8 20H4.5" stroke="#9a9a9a" stroke-width="1.6"/><path d="M2 4H3.2M2 8H3.2M2 12H3.2M2 16H3.2M2 20H3.2" stroke="#fff" stroke-width="1.2"/><path d="M7 5.5H17M7 7.5H17M7 9.5H17M7 11.5H14M7 13.5H17M7 15.5H17M7 17.5H17M7 19.5H14" stroke="#8f8f8f" stroke-width="1"/></svg>
<span class="t" style="left:108px;top:73.84px;font-size:12px;color:#000;font-weight:400;">Riferimenti ADR</span>
<span class="t" style="left:371px;top:65.84px;font-size:12px;color:#c4c4c4;width:174px;overflow:hidden">ADR: The European Agreement concerning</span>
<span class="t" style="left:371px;top:80.84px;font-size:12px;color:#c4c4c4;width:174px;overflow:hidden">Update: 2019</span>
<svg style="left:80px;top:100px" width="24" height="24" viewBox="0 0 24 24"><rect x="3" y="1" width="18" height="22" fill="#fff" stroke="#3a72b5" stroke-width="2"/><path d="M0.8 4H4.5M0.8 8H4.5M0.8 12H4.5M0.8 16H4.5M0.8 20H4.5" stroke="#9a9a9a" stroke-width="1.6"/><path d="M2 4H3.2M2 8H3.2M2 12H3.2M2 16H3.2M2 20H3.2" stroke="#fff" stroke-width="1.2"/><path d="M7 5.5H17M7 7.5H17M7 9.5H17M7 11.5H14M7 13.5H17M7 15.5H17M7 17.5H17M7 19.5H14" stroke="#8f8f8f" stroke-width="1"/></svg>
<span class="t" style="left:108px;top:105.84px;font-size:12px;color:#000;font-weight:400;">ADR 1.8.3</span>
<span class="t" style="left:371px;top:97.84px;font-size:12px;color:#c4c4c4;width:174px;overflow:hidden">ADR 1.8.3</span>
<div style="left:35px;top:140px;width:7px;height:7px;border:1px solid #8c8c8c;border-radius:1px;background:linear-gradient(#fff,#fff 50%,#e6e6e6)"></div>
<div style="left:37px;top:144px;width:5px;height:1px;background:#3050a0"></div>
<svg style="left:52px;top:132px" width="24" height="24" viewBox="0 0 24 24"><path d="M0 3.5Q0 3 0.6 3H10L12.8 6H22L22.8 8.6H4L0.9 21.8H0Z" fill="#707070"/><path d="M5 10H24L21 22.8H2Z" fill="#e8b562"/></svg>
<span class="t" style="left:80px;top:137.84px;font-size:12px;color:#000;font-weight:400;">1. Premessa</span>
<svg style="left:80px;top:164px" width="24" height="24" viewBox="0 0 24 24"><path d="M3 23V1H21V14" fill="#fff" stroke="#3a72b5" stroke-width="2"/><path d="M3 23H9" stroke="#3a72b5" stroke-width="2"/><path d="M0.8 4H4.5M0.8 8H4.5M0.8 12H4.5M0.8 16H4.5M0.8 20H4.5" stroke="#9a9a9a" stroke-width="1.6"/><path d="M2 4H3.2M2 8H3.2M2 12H3.2M2 16H3.2M2 20H3.2" stroke="#fff" stroke-width="1.2"/><path d="M7 5.5H17.5M7 7.5H17.5M7 9.5H17.5M7 11.5H10M7 14.5H10M7 16.5H12M7 18.5H12" stroke="#9a9a9a" stroke-width="1"/><path d="M24 10V24H10.5Z" fill="#e8b05f"/><path d="M21 14.5V21H15Z" fill="#fff"/><path d="M13 14.5L21.5 23" stroke="#fff" stroke-width="4.5"/><path d="M13 14.5L21.5 23" stroke="#2f6db5" stroke-width="2.8"/></svg>
<span class="t" style="left:108px;top:169.84px;font-size:12px;color:#000;font-weight:400;">Nota del consulente</span>
<svg style="left:52px;top:196px" width="24" height="24" viewBox="0 0 24 24"><path d="M0.5 11L7 7.5V11L13.5 7.5V11H23V24H0.5Z" fill="#6e6e6e"/><rect x="17" y="5" width="3.5" height="5" fill="#3a72b5"/><path d="M18 3L21.5 1.5" stroke="#555" stroke-width="1.2"/><path d="M3 15H8M9.5 15H14.5M16 15H21M3 18H8M9.5 18H14.5M16 18H21" stroke="#fff" stroke-width="1.6"/></svg>
<span class="t" style="left:80px;top:201.84px;font-size:12px;color:#000;font-weight:400;">2. Dati impresa</span>
<div style="left:35px;top:236px;width:7px;height:7px;border:1px solid #8c8c8c;border-radius:1px;background:linear-gradient(#fff,#fff 50%,#e6e6e6)"></div>
<div style="left:37px;top:240px;width:5px;height:1px;background:#3050a0"></div>
<svg style="left:52px;top:228px" width="24" height="24" viewBox="0 0 24 24"><path d="M0 3.5Q0 3 0.6 3H10L12.8 6H22L22.8 8.6H4L0.9 21.8H0Z" fill="#707070"/><path d="M5 10H24L21 22.8H2Z" fill="#e8b562"/></svg>
<span class="t" style="left:80px;top:233.84px;font-size:12px;color:#000;font-weight:400;">2.4. Attività dell&#x27;impresa inerenti le merci pericolose</span>
<svg style="left:80px;top:260px" width="24" height="24" viewBox="0 0 24 24"><path d="M3 23V1H21V14" fill="#fff" stroke="#3a72b5" stroke-width="2"/><path d="M3 23H9" stroke="#3a72b5" stroke-width="2"/><path d="M0.8 4H4.5M0.8 8H4.5M0.8 12H4.5M0.8 16H4.5M0.8 20H4.5" stroke="#9a9a9a" stroke-width="1.6"/><path d="M2 4H3.2M2 8H3.2M2 12H3.2M2 16H3.2M2 20H3.2" stroke="#fff" stroke-width="1.2"/><path d="M7 5.5H17.5M7 7.5H17.5M7 9.5H17.5M7 11.5H10M7 14.5H10M7 16.5H12M7 18.5H12" stroke="#9a9a9a" stroke-width="1"/><path d="M24 10V24H10.5Z" fill="#e8b05f"/><path d="M21 14.5V21H15Z" fill="#fff"/><path d="M13 14.5L21.5 23" stroke="#fff" stroke-width="4.5"/><path d="M13 14.5L21.5 23" stroke="#2f6db5" stroke-width="2.8"/></svg>
<span class="t" style="left:108px;top:265.84px;font-size:12px;color:#000;font-weight:400;">Nota del consulente</span>
<div style="left:35px;top:300px;width:7px;height:7px;border:1px solid #8c8c8c;border-radius:1px;background:linear-gradient(#fff,#fff 50%,#e6e6e6)"></div>
<div style="left:37px;top:304px;width:5px;height:1px;background:#3050a0"></div>
<div style="left:39px;top:302px;width:1px;height:5px;background:#1e3a78"></div>
<svg style="left:52px;top:292px" width="24" height="24" viewBox="0 0 24 24"><circle cx="12" cy="12" r="12" fill="#505050"/><path d="M12 12L6 1.6A12 12 0 0 1 18 1.6Z" fill="#efb95e"/><path d="M12 12L24 12A12 12 0 0 1 18 22.4Z" fill="#efb95e"/><path d="M12 12L6 22.4A12 12 0 0 1 0 12Z" fill="#efb95e"/><rect x="10" y="11" width="14" height="14" fill="#fff"/><rect x="11.5" y="12.5" width="12" height="11" fill="#fff" stroke="#5a5a5a"/><rect x="11" y="12" width="13" height="2" fill="#d0401e"/><path d="M14.5 16.5H20.5M14.5 18.5H20.5M14.5 20.5H20.5" stroke="#505050" stroke-width="1"/></svg>
<span class="t" style="left:80px;top:297.84px;font-size:12px;color:#000;font-weight:400;">3. Merci pericolose</span>
<div style="left:35px;top:332px;width:7px;height:7px;border:1px solid #8c8c8c;border-radius:1px;background:linear-gradient(#fff,#fff 50%,#e6e6e6)"></div>
<div style="left:37px;top:336px;width:5px;height:1px;background:#3050a0"></div>
<svg style="left:52px;top:324px" width="24" height="24" viewBox="0 0 24 24"><path d="M9.5 5.5H23.5V19.5H9.5Z" fill="none" stroke="#333" stroke-width="1.3"/><path d="M9.5 10H4.5L0.8 14.5V19.5H9.5" fill="none" stroke="#333" stroke-width="1.3"/><path d="M2.5 14.5H7V11.5" fill="none" stroke="#333" stroke-width="1"/><circle cx="5" cy="20.5" r="2.3" fill="#fff" stroke="#333" stroke-width="1.3"/><circle cx="17.5" cy="20.5" r="2.3" fill="#fff" stroke="#333" stroke-width="1.3"/></svg>
<span class="t" style="left:80px;top:329.84px;font-size:12px;color:#000;font-weight:400;">4. Veicoli</span>
<svg style="left:80px;top:356px" width="24" height="24" viewBox="0 0 24 24"><path d="M3 23V1H21V14" fill="#fff" stroke="#3a72b5" stroke-width="2"/><path d="M3 23H9" stroke="#3a72b5" stroke-width="2"/><path d="M0.8 4H4.5M0.8 8H4.5M0.8 12H4.5M0.8 16H4.5M0.8 20H4.5" stroke="#9a9a9a" stroke-width="1.6"/><path d="M2 4H3.2M2 8H3.2M2 12H3.2M2 16H3.2M2 20H3.2" stroke="#fff" stroke-width="1.2"/><path d="M7 5.5H17.5M7 7.5H17.5M7 9.5H17.5M7 11.5H10M7 14.5H10M7 16.5H12M7 18.5H12" stroke="#9a9a9a" stroke-width="1"/><path d="M24 10V24H10.5Z" fill="#e8b05f"/><path d="M21 14.5V21H15Z" fill="#fff"/><path d="M13 14.5L21.5 23" stroke="#fff" stroke-width="4.5"/><path d="M13 14.5L21.5 23" stroke="#2f6db5" stroke-width="2.8"/></svg>
<span class="t" style="left:108px;top:361.84px;font-size:12px;color:#000;font-weight:400;">Nota del consulente</span>
<svg style="left:80px;top:388px" width="24" height="24" viewBox="0 0 24 24"><rect x="3" y="1" width="18" height="22" fill="#fff" stroke="#3a72b5" stroke-width="2"/><path d="M0.8 4H4.5M0.8 8H4.5M0.8 12H4.5M0.8 16H4.5M0.8 20H4.5" stroke="#9a9a9a" stroke-width="1.6"/><path d="M2 4H3.2M2 8H3.2M2 12H3.2M2 16H3.2M2 20H3.2" stroke="#fff" stroke-width="1.2"/><path d="M7 5.5H17M7 7.5H17M7 9.5H17M7 11.5H14M7 13.5H17M7 15.5H17M7 17.5H17M7 19.5H14" stroke="#8f8f8f" stroke-width="1"/></svg>
<span class="t" style="left:108px;top:393.84px;font-size:12px;color:#000;font-weight:400;">Note</span>
<span class="t" style="left:371px;top:385.84px;font-size:12px;color:#c4c4c4;width:174px;overflow:hidden">Note</span>
<div style="left:35px;top:428px;width:7px;height:7px;border:1px solid #8c8c8c;border-radius:1px;background:linear-gradient(#fff,#fff 50%,#e6e6e6)"></div>
<div style="left:37px;top:432px;width:5px;height:1px;background:#3050a0"></div>
<svg style="left:52px;top:420px" width="24" height="24" viewBox="0 0 24 24"><g transform="scale(0.8)"><path d="M0.5 4Q0.5 0.5 13 0.5Q25.5 0.5 25.5 4V27.5Q25.5 31 13 31Q0.5 31 0.5 27.5Z" fill="#6a6a6a"/><ellipse cx="13" cy="4" rx="9.8" ry="2.6" fill="#fff"/><circle cx="19.5" cy="4" r="1.1" fill="#6a6a6a"/><path d="M5 8.5Q8 9.5 12.5 9.5V17Q8 17 5 16Z" fill="#fff"/><path d="M5 20Q8 21 12.5 21V29Q8 29 5 28Z" fill="#fff"/><rect x="13.8" y="16" width="16.2" height="16" fill="#fff" opacity="0.9"/><rect x="15.6" y="17.6" width="12.8" height="13.4" fill="#fff" stroke="#5a5a5a" stroke-width="1.2"/><rect x="15" y="17" width="14" height="3" fill="#d0401e"/><path d="M18.5 22.5H25.5M18.5 24.5H25.5M18.5 26.5H25.5M18.5 28.5H25.5" stroke="#505050" stroke-width="0.9"/></g></svg>
<span class="t" style="left:80px;top:425.84px;font-size:12px;color:#000;font-weight:400;">5. Imballaggi ADR</span>
<svg style="left:80px;top:452px" width="24" height="24" viewBox="0 0 24 24"><path d="M3 23V1H21V14" fill="#fff" stroke="#3a72b5" stroke-width="2"/><path d="M3 23H9" stroke="#3a72b5" stroke-width="2"/><path d="M0.8 4H4.5M0.8 8H4.5M0.8 12H4.5M0.8 16H4.5M0.8 20H4.5" stroke="#9a9a9a" stroke-width="1.6"/><path d="M2 4H3.2M2 8H3.2M2 12H3.2M2 16H3.2M2 20H3.2" stroke="#fff" stroke-width="1.2"/><path d="M7 5.5H17.5M7 7.5H17.5M7 9.5H17.5M7 11.5H10M7 14.5H10M7 16.5H12M7 18.5H12" stroke="#9a9a9a" stroke-width="1"/><path d="M24 10V24H10.5Z" fill="#e8b05f"/><path d="M21 14.5V21H15Z" fill="#fff"/><path d="M13 14.5L21.5 23" stroke="#fff" stroke-width="4.5"/><path d="M13 14.5L21.5 23" stroke="#2f6db5" stroke-width="2.8"/></svg>
<span class="t" style="left:108px;top:457.84px;font-size:12px;color:#000;font-weight:400;">Nota del consulente</span>
<svg style="left:80px;top:484px" width="24" height="24" viewBox="0 0 24 24"><rect x="3" y="1" width="18" height="22" fill="#fff" stroke="#3a72b5" stroke-width="2"/><path d="M0.8 4H4.5M0.8 8H4.5M0.8 12H4.5M0.8 16H4.5M0.8 20H4.5" stroke="#9a9a9a" stroke-width="1.6"/><path d="M2 4H3.2M2 8H3.2M2 12H3.2M2 16H3.2M2 20H3.2" stroke="#fff" stroke-width="1.2"/><path d="M7 5.5H17M7 7.5H17M7 9.5H17M7 11.5H14M7 13.5H17M7 15.5H17M7 17.5H17M7 19.5H14" stroke="#8f8f8f" stroke-width="1"/></svg>
<span class="t" style="left:108px;top:489.84px;font-size:12px;color:#000;font-weight:400;">Note</span>
<span class="t" style="left:371px;top:481.84px;font-size:12px;color:#c4c4c4;width:174px;overflow:hidden">1.2.1 Definizioni</span>
<div style="left:35px;top:524px;width:7px;height:7px;border:1px solid #8c8c8c;border-radius:1px;background:linear-gradient(#fff,#fff 50%,#e6e6e6)"></div>
<div style="left:37px;top:528px;width:5px;height:1px;background:#3050a0"></div>
<svg style="left:52px;top:516px" width="24" height="24" viewBox="0 0 24 24"><path d="M5 6Q5 1 11 1Q17 1 17 6H18.5V7.5H3.5V6Z" fill="#e8b05f"/><path d="M6.5 8L8 12L10 13V19M15 8L14 11" stroke="#5a5a5a" stroke-width="1.3" fill="none"/><path d="M1 20Q1 15 5 13V22H1Z" fill="#6b6b6b"/><rect x="11.5" y="12.5" width="12" height="11" fill="#fff" stroke="#5a5a5a"/><rect x="11" y="12" width="13" height="2" fill="#d0401e"/><path d="M14.5 16.5H20.5M14.5 18.5H20.5M14.5 20.5H20.5" stroke="#505050" stroke-width="1"/></svg>
<span class="t" style="left:80px;top:521.84px;font-size:12px;color:#000;font-weight:400;">6. Personale impiegato in mansioni ADR</span>
<svg style="left:80px;top:548px" width="24" height="24" viewBox="0 0 24 24"><path d="M3 23V1H21V14" fill="#fff" stroke="#3a72b5" stroke-width="2"/><path d="M3 23H9" stroke="#3a72b5" stroke-width="2"/><path d="M0.8 4H4.5M0.8 8H4.5M0.8 12H4.5M0.8 16H4.5M0.8 20H4.5" stroke="#9a9a9a" stroke-width="1.6"/><path d="M2 4H3.2M2 8H3.2M2 12H3.2M2 16H3.2M2 20H3.2" stroke="#fff" stroke-width="1.2"/><path d="M7 5.5H17.5M7 7.5H17.5M7 9.5H17.5M7 11.5H10M7 14.5H10M7 16.5H12M7 18.5H12" stroke="#9a9a9a" stroke-width="1"/><path d="M24 10V24H10.5Z" fill="#e8b05f"/><path d="M21 14.5V21H15Z" fill="#fff"/><path d="M13 14.5L21.5 23" stroke="#fff" stroke-width="4.5"/><path d="M13 14.5L21.5 23" stroke="#2f6db5" stroke-width="2.8"/></svg>
<span class="t" style="left:108px;top:553.84px;font-size:12px;color:#000;font-weight:400;">Nota del consulente</span>
<svg style="left:80px;top:580px" width="24" height="24" viewBox="0 0 24 24"><rect x="3" y="1" width="18" height="22" fill="#fff" stroke="#3a72b5" stroke-width="2"/><path d="M0.8 4H4.5M0.8 8H4.5M0.8 12H4.5M0.8 16H4.5M0.8 20H4.5" stroke="#9a9a9a" stroke-width="1.6"/><path d="M2 4H3.2M2 8H3.2M2 12H3.2M2 16H3.2M2 20H3.2" stroke="#fff" stroke-width="1.2"/><path d="M7 5.5H17M7 7.5H17M7 9.5H17M7 11.5H14M7 13.5H17M7 15.5H17M7 17.5H17M7 19.5H14" stroke="#8f8f8f" stroke-width="1"/></svg>
<span class="t" style="left:108px;top:585.84px;font-size:12px;color:#000;font-weight:400;">Note</span>
<span class="t" style="left:371px;top:577.84px;font-size:12px;color:#c4c4c4;width:174px;overflow:hidden">1.2.1 Definizioni</span>
<div style="left:35px;top:620px;width:7px;height:7px;border:1px solid #8c8c8c;border-radius:1px;background:linear-gradient(#fff,#fff 50%,#e6e6e6)"></div>
<div style="left:37px;top:624px;width:5px;height:1px;background:#3050a0"></div>
<div style="left:39px;top:622px;width:1px;height:5px;background:#1e3a78"></div>
<svg style="left:52px;top:612px" width="24" height="24" viewBox="0 0 24 24"><path d="M1 2V18.5H12" fill="none" stroke="#3b74b4" stroke-width="2"/><path d="M22 2V13" stroke="#3b74b4" stroke-width="2"/><path d="M2.5 1.5Q7 0.5 11.5 2V17.5Q7 16.5 2.5 17.5Z" fill="#fff" stroke="#6b6b6b" stroke-width="1"/><path d="M11.5 2Q16 0.5 20.5 1.5V13H11.5Z" fill="#fff" stroke="#6b6b6b" stroke-width="1"/><path d="M4.5 4.5H9.5M4.5 6.5H9.5M4.5 8.5H9.5M4.5 11H9.5M4.5 13.5H9.5M13.5 4.5H18.5M13.5 6.5H18.5M13.5 8.5H18.5" stroke="#8a8a8a" stroke-width="0.9"/><rect x="11.5" y="12.5" width="12" height="11" fill="#fff" stroke="#5a5a5a"/><rect x="11" y="12" width="13" height="2" fill="#d0401e"/><path d="M14.5 16.5H20.5M14.5 18.5H20.5M14.5 20.5H20.5" stroke="#505050" stroke-width="1"/></svg>
<span class="t" style="left:80px;top:617.84px;font-size:12px;color:#000;font-weight:400;">7. Registro formazione operatori</span>
<div style="left:35px;top:652px;width:7px;height:7px;border:1px solid #8c8c8c;border-radius:1px;background:linear-gradient(#fff,#fff 50%,#e6e6e6)"></div>
<div style="left:37px;top:656px;width:5px;height:1px;background:#3050a0"></div>
<div style="left:39px;top:654px;width:1px;height:5px;background:#1e3a78"></div>
<svg style="left:52px;top:644px" width="24" height="24" viewBox="0 0 24 24"><path d="M0 3.5Q0 3 0.6 3H10L12.8 6H22L22.8 8.6H4L0.9 21.8H0Z" fill="#707070"/><path d="M5 10H24L21 22.8H2Z" fill="#e8b562"/></svg>
<span class="t" style="left:80px;top:649.84px;font-size:12px;color:#000;font-weight:400;">8. Descrizione prassi e procedure</span>
<div style="left:35px;top:684px;width:7px;height:7px;border:1px solid #8c8c8c;border-radius:1px;background:linear-gradient(#fff,#fff 50%,#e6e6e6)"></div>
<div style="left:37px;top:688px;width:5px;height:1px;background:#3050a0"></div>
<div style="left:39px;top:686px;width:1px;height:5px;background:#1e3a78"></div>
<svg style="left:52px;top:676px" width="24" height="24" viewBox="0 0 24 24"><path d="M7 6Q1.5 9.5 2 15Q2.5 21 8 22.5H11" fill="none" stroke="#3b74b4" stroke-width="2.8"/><path d="M4.5 21.5H11.5" stroke="#3b74b4" stroke-width="2.5"/><path d="M8 1.5L10 0.8L17 10.5L14.8 11.8Z" fill="#fff" stroke="#3b74b4" stroke-width="1.4"/><path d="M9.5 2.5L15 10" stroke="#6b6b6b" stroke-width="0.8"/><rect x="11.5" y="12.5" width="12" height="11" fill="#fff" stroke="#5a5a5a"/><rect x="11" y="12" width="13" height="2" fill="#d0401e"/><path d="M14.5 16.5H20.5M14.5 18.5H20.5M14.5 20.5H20.5" stroke="#505050" stroke-width="1"/></svg>
<span class="t" style="left:80px;top:681.84px;font-size:12px;color:#000;font-weight:400;">9. Controlli documentali/prassi e procedure</span>
<div style="left:35px;top:716px;width:7px;height:7px;border:1px solid #8c8c8c;border-radius:1px;background:linear-gradient(#fff,#fff 50%,#e6e6e6)"></div>
<div style="left:37px;top:720px;width:5px;height:1px;background:#3050a0"></div>
<div style="left:39px;top:718px;width:1px;height:5px;background:#1e3a78"></div>
<svg style="left:52px;top:708px" width="24" height="24" viewBox="0 0 24 24"><path d="M10.5 6L17 1.5L23.5 6V13H10.5Z" fill="#6b6b6b"/><rect x="14.5" y="8.5" width="3" height="4" fill="#fff"/><g transform="translate(-2.6,-2.3) scale(0.667,0.76)"><path d="M9 3Q17 6 16.5 13.5Q19 13 21.5 13Q24 20 23 26Q22 32 15.5 34.5L10.5 34.5Q4 32 4 24Q4 15 8.5 10Q9.5 12 10.5 12.5Q11 8 9 3Z" fill="#e8b562" stroke="#fff" stroke-width="2" paint-order="stroke"/><path d="M9 3Q17 6 16.5 13.5Q19 13 21.5 13Q24 20 23 26Q22 32 15.5 34.5L10.5 34.5Q4 32 4 24Q4 15 8.5 10Q9.5 12 10.5 12.5Q11 8 9 3Z" fill="#e8b562" stroke="#e9c020" stroke-width="0.8"/><path d="M12.5 19Q15 21 15.5 24.5Q17 25 18.5 25Q18.5 30 15.5 34.5L10.5 34.5Q8.5 31 9.5 25Q11 26 12 26Q13 22 12.5 19Z" fill="#fff"/></g><rect x="11.5" y="12.5" width="12" height="11" fill="#fff" stroke="#5a5a5a"/><rect x="11" y="12" width="13" height="2" fill="#d0401e"/><path d="M14.5 16.5H20.5M14.5 18.5H20.5M14.5 20.5H20.5" stroke="#505050" stroke-width="1"/></svg>
<span class="t" style="left:80px;top:713.84px;font-size:12px;color:#000;font-weight:400;">10. Incidenti/Emergenze/Sanzioni</span>
<div style="left:35px;top:748px;width:7px;height:7px;border:1px solid #8c8c8c;border-radius:1px;background:linear-gradient(#fff,#fff 50%,#e6e6e6)"></div>
<div style="left:37px;top:752px;width:5px;height:1px;background:#3050a0"></div>
<div style="left:39px;top:750px;width:1px;height:5px;background:#1e3a78"></div>
<svg style="left:52px;top:740px" width="24" height="24" viewBox="0 0 24 24"><path d="M0 3.5Q0 3 0.6 3H10L12.8 6H22L22.8 8.6H4L0.9 21.8H0Z" fill="#707070"/><path d="M5 10H24L21 22.8H2Z" fill="#e8b562"/></svg>
<span class="t" style="left:80px;top:745.84px;font-size:12px;color:#000;font-weight:400;">11. Gestione e verifica prassi e procedure</span>
<div style="left:35px;top:780px;width:7px;height:7px;border:1px solid #8c8c8c;border-radius:1px;background:linear-gradient(#fff,#fff 50%,#e6e6e6)"></div>
<div style="left:37px;top:784px;width:5px;height:1px;background:#3050a0"></div>
<div style="left:39px;top:782px;width:1px;height:5px;background:#1e3a78"></div>
<svg style="left:52px;top:772px" width="24" height="24" viewBox="0 0 24 24"><path d="M4 4.5H17.5M13.5 1L17.5 4.5L13.5 8" fill="none" stroke="#6b6b6b" stroke-width="1.8"/><rect x="2" y="8.5" width="6.5" height="6.5" fill="#3b74b4"/><path d="M10 10.5H13M16 10H21" stroke="#3b74b4" stroke-width="1.3"/><path d="M1 23V20Q1 16.5 5 16.5Q9 16.5 9 20V23Z" fill="#6b6b6b"/><circle cx="5" cy="20.5" r="1.6" fill="#fff"/><rect x="11.5" y="12.5" width="12" height="11" fill="#fff" stroke="#5a5a5a"/><rect x="11" y="12" width="13" height="2" fill="#d0401e"/><path d="M14.5 16.5H20.5M14.5 18.5H20.5M14.5 20.5H20.5" stroke="#505050" stroke-width="1"/></svg>
<span class="t" style="left:80px;top:777.84px;font-size:12px;color:#000;font-weight:400;">11.1. Tabella gestione prassi e procedure</span>
<div style="left:35px;top:812px;width:7px;height:7px;border:1px solid #8c8c8c;border-radius:1px;background:linear-gradient(#fff,#fff 50%,#e6e6e6)"></div>
<div style="left:37px;top:816px;width:5px;height:1px;background:#3050a0"></div>
<div style="left:39px;top:814px;width:1px;height:5px;background:#1e3a78"></div>
<svg style="left:52px;top:804px" width="24" height="24" viewBox="0 0 24 24"><path d="M0 3.5Q0 3 0.6 3H10L12.8 6H22L22.8 8.6H4L0.9 21.8H0Z" fill="#707070"/><path d="M5 10H24L21 22.8H2Z" fill="#e8b562"/></svg>
<span class="t" style="left:80px;top:809.84px;font-size:12px;color:#000;font-weight:400;">12. Note finali</span>
</div>
<div style="left:1029px;top:156px;width:15px;height:836px;background:#f0f0f0"></div>
<div style="left:1029px;top:173px;width:15px;height:742px;background:#cdcdcd"></div>
<svg style="left:1032px;top:161px" width="9" height="6" viewBox="0 0 9 6"><path d="M1 5L4.5 1.5L8 5" fill="none" stroke="#606060" stroke-width="1.8"/></svg>
<svg style="left:1032px;top:980px" width="9" height="6" viewBox="0 0 9 6"><path d="M1 1L4.5 4.5L8 1" fill="none" stroke="#606060" stroke-width="1.8"/></svg>
<div style="left:484px;top:992px;width:560px;height:16px;background:#f0f0f0"></div>
<div style="left:501px;top:993px;width:503px;height:14px;background:#cdcdcd"></div>
<svg style="left:489px;top:995px" width="6" height="9" viewBox="0 0 6 9"><path d="M5 1L1.5 4.5L5 8" fill="none" stroke="#606060" stroke-width="1.8"/></svg>
<svg style="left:1016px;top:995px" width="6" height="9" viewBox="0 0 6 9"><path d="M1 1L4.5 4.5L1 8" fill="none" stroke="#606060" stroke-width="1.8"/></svg>
<div style="left:1044px;top:131px;width:5px;height:877px;background:#f0f0f0"></div>
<div style="left:1049px;top:131px;width:862px;height:46px;border:1px solid #8aa2d8;background:linear-gradient(#e8ebf9,#d3def5 50%,#b9c9ec)"></div>
<svg style="left:1056px;top:138px" width="30" height="32" viewBox="0 0 30 32"><path d="M0.5 4Q0.5 0.5 13 0.5Q25.5 0.5 25.5 4V27.5Q25.5 31 13 31Q0.5 31 0.5 27.5Z" fill="#6a6a6a"/><ellipse cx="13" cy="4" rx="9.8" ry="2.6" fill="#fff"/><circle cx="19.5" cy="4" r="1.1" fill="#6a6a6a"/><path d="M5 8.5Q8 9.5 12.5 9.5V17Q8 17 5 16Z" fill="#fff"/><path d="M5 20Q8 21 12.5 21V29Q8 29 5 28Z" fill="#fff"/><rect x="13.8" y="16" width="16.2" height="16" fill="#fff" opacity="0.9"/><rect x="15.6" y="17.6" width="12.8" height="13.4" fill="#fff" stroke="#5a5a5a" stroke-width="1.2"/><rect x="15" y="17" width="14" height="3" fill="#d0401e"/><path d="M18.5 22.5H25.5M18.5 24.5H25.5M18.5 26.5H25.5M18.5 28.5H25.5" stroke="#505050" stroke-width="0.9"/></svg>
<span class="t" style="left:1093px;top:140.14px;font-size:27px;color:#000;font-weight:400;letter-spacing:0.1px">5. Imballaggi ADR</span>
<div style="left:1049px;top:179px;width:863px;height:25px;background:#f5f6f7"></div>
<div style="left:1052px;top:183px;width:2px;height:2px;background:#a0a0a0"></div>
<div style="left:1052px;top:187px;width:2px;height:2px;background:#a0a0a0"></div>
<div style="left:1052px;top:191px;width:2px;height:2px;background:#a0a0a0"></div>
<div style="left:1052px;top:195px;width:2px;height:2px;background:#a0a0a0"></div>
<svg style="left:1060px;top:183px" width="16" height="16" viewBox="0 0 16 16"><circle cx="8" cy="8" r="8" fill="#57ad86"/><path d="M8 3.3V12.7M3.3 8H12.7" stroke="#fff" stroke-width="2.2"/></svg>
<span class="t" style="left:1079px;top:184.84px;font-size:12px;color:#000;font-weight:400;">Aggiungi riga</span>
<svg style="left:1160px;top:184px" width="14" height="14" viewBox="0 0 14 14"><path d="M2 2L12 12M12 2L2 12" stroke="#d9472b" stroke-width="3"/></svg>
<span class="t" style="left:1178px;top:184.84px;font-size:12px;color:#000;font-weight:400;">Rimuovi riga</span>
<div style="left:1254px;top:184px;width:1px;height:15px;background:#cdd0d4"></div>
<svg style="left:1258px;top:182px" width="18" height="18" viewBox="0 0 18 18"><rect x="2.6" y="1.6" width="12.8" height="15" rx="1" fill="#fff" stroke="#555" stroke-width="1.2"/><rect x="2" y="1" width="14" height="3.2" fill="#3b74b4"/><path d="M5 5.5H7M5 7.5H7M5 9.5H7M5 11.5H7M5 13.5H7" stroke="#444" stroke-width="1.1"/><path d="M8 5.5H12.5M8 7.5H10" stroke="#999" stroke-width="1"/><path d="M17.8 8H11.3L7.8 13H11L6.8 18L17 11.6H13.3Z" fill="#e39422" stroke="#fff" stroke-width="0.7" paint-order="stroke"/></svg>
<span class="t" style="left:1278px;top:184.84px;font-size:12px;color:#000;font-weight:400;">Valori predefiniti</span>
<div style="left:1096px;top:204px;width:1px;height:25px;background:#e5e5e5"></div>
<div style="left:1384px;top:204px;width:1px;height:25px;background:#e5e5e5"></div>
<div style="left:1408px;top:204px;width:1px;height:25px;background:#e5e5e5"></div>
<div style="left:1478px;top:204px;width:1px;height:25px;background:#e5e5e5"></div>
<div style="left:1911px;top:204px;width:1px;height:25px;background:#e5e5e5"></div>
<svg style="left:1070px;top:204px" width="8" height="5" viewBox="0 0 8 5"><path d="M0.5 4.5L4 1L7.5 4.5" fill="none" stroke="#333" stroke-width="1"/></svg>
<span class="t" style="left:1055px;top:210.84px;font-size:12px;color:#000;font-weight:400;">Ordine</span>
<span class="t" style="left:1103px;top:210.84px;font-size:12px;color:#000;font-weight:400;">Tipo imballaggio</span>
<span class="t" style="left:1391px;top:210.84px;font-size:12px;color:#000;font-weight:400;">O.</span>
<span class="t" style="left:1415px;top:210.84px;font-size:12px;color:#000;font-weight:400;">Anno</span>
<span class="t" style="left:1485px;top:210.84px;font-size:12px;color:#000;font-weight:400;">Note</span>
<div style="left:1049px;top:229px;width:48px;height:26px;background:#fafafa"></div>
<div style="left:1097px;top:229px;width:1px;height:779px;background:#ececec"></div>
<div style="left:1385px;top:229px;width:1px;height:779px;background:#ececec"></div>
<div style="left:1409px;top:229px;width:1px;height:779px;background:#ececec"></div>
<div style="left:1479px;top:229px;width:1px;height:779px;background:#ececec"></div>
<div style="left:1049px;top:255px;width:862px;height:1px;background:#ececec"></div>
<div style="left:1049px;top:282px;width:862px;height:1px;background:#ececec"></div>
<div style="left:1049px;top:309px;width:862px;height:1px;background:#ececec"></div>
<div style="left:1049px;top:336px;width:862px;height:1px;background:#ececec"></div>
<div style="left:1049px;top:363px;width:862px;height:1px;background:#ececec"></div>
<div style="left:1049px;top:390px;width:862px;height:1px;background:#ececec"></div>
<div style="left:1049px;top:417px;width:862px;height:1px;background:#ececec"></div>
<div style="left:1049px;top:444px;width:862px;height:1px;background:#ececec"></div>
<div style="left:1049px;top:471px;width:862px;height:1px;background:#ececec"></div>
<div style="left:1049px;top:498px;width:862px;height:1px;background:#ececec"></div>
<div style="left:1049px;top:525px;width:862px;height:1px;background:#ececec"></div>
<div style="left:1049px;top:552px;width:862px;height:1px;background:#ececec"></div>
<div style="left:1049px;top:579px;width:862px;height:1px;background:#ececec"></div>
<div style="left:1049px;top:606px;width:862px;height:1px;background:#ececec"></div>
<div style="left:1049px;top:633px;width:862px;height:1px;background:#ececec"></div>
<div style="left:1049px;top:660px;width:862px;height:1px;background:#ececec"></div>
<div style="left:1049px;top:687px;width:862px;height:1px;background:#ececec"></div>
<div style="left:1049px;top:714px;width:862px;height:1px;background:#ececec"></div>
<div style="left:1049px;top:741px;width:862px;height:1px;background:#ececec"></div>
<div style="left:1049px;top:768px;width:862px;height:1px;background:#ececec"></div>
<div style="left:1049px;top:795px;width:862px;height:1px;background:#ececec"></div>
<div style="left:1049px;top:822px;width:862px;height:1px;background:#ececec"></div>
<div style="left:1049px;top:849px;width:862px;height:1px;background:#ececec"></div>
<div style="left:1049px;top:876px;width:862px;height:1px;background:#ececec"></div>
<div style="left:1049px;top:903px;width:862px;height:1px;background:#ececec"></div>
<div style="left:1049px;top:930px;width:862px;height:1px;background:#ececec"></div>
<div style="left:1049px;top:957px;width:862px;height:1px;background:#ececec"></div>
<div style="left:1049px;top:984px;width:862px;height:1px;background:#ececec"></div>
<svg style="left:1054px;top:230px" width="24" height="24" viewBox="0 0 24 24"><g transform="scale(0.8)"><path d="M0.5 4Q0.5 0.5 13 0.5Q25.5 0.5 25.5 4V27.5Q25.5 31 13 31Q0.5 31 0.5 27.5Z" fill="#6a6a6a"/><ellipse cx="13" cy="4" rx="9.8" ry="2.6" fill="#fff"/><circle cx="19.5" cy="4" r="1.1" fill="#6a6a6a"/><path d="M5 8.5Q8 9.5 12.5 9.5V17Q8 17 5 16Z" fill="#fff"/><path d="M5 20Q8 21 12.5 21V29Q8 29 5 28Z" fill="#fff"/><rect x="13.8" y="16" width="16.2" height="16" fill="#fff" opacity="0.9"/><rect x="15.6" y="17.6" width="12.8" height="13.4" fill="#fff" stroke="#5a5a5a" stroke-width="1.2"/><rect x="15" y="17" width="14" height="3" fill="#d0401e"/><path d="M18.5 22.5H25.5M18.5 24.5H25.5M18.5 26.5H25.5M18.5 28.5H25.5" stroke="#505050" stroke-width="0.9"/></g></svg>
<span class="t" style="left:1080px;top:236.84px;font-size:12px;color:#000;font-weight:400;">1</span>
<span class="t" style="left:1101px;top:236.84px;font-size:12px;color:#000;font-weight:400;">IBC</span>
<div style="left:1390px;top:236px;width:11px;height:11px;border:1px solid #333;background:#fff"></div>
<span class="t" style="left:1412px;top:236.84px;font-size:12px;color:#000;font-weight:400;">2011</span>
<span class="t" style="left:1482px;top:236.84px;font-size:12px;color:#000;font-weight:400;">Adibito a UN 3082</span>
<div style="left:0px;top:1015px;width:1920px;height:25px;background:#f3f4f6"></div>
<svg style="left:1px;top:1020px" width="16" height="16" viewBox="0 0 16 16"><circle cx="8" cy="8" r="8" fill="#3a72b5"/><rect x="6.8" y="6.5" width="2.4" height="6.5" fill="#fff"/><circle cx="8" cy="4" r="1.3" fill="#fff"/></svg>
<span class="t" style="left:20px;top:1021.84px;font-size:12px;color:#000;font-weight:400;letter-spacing:-0.12px">Comandi per la gestione del database</span>
<div style="left:1614px;top:1018px;width:1px;height:19px;background:#a0a0a0"></div>
<div style="left:1691px;top:1018px;width:1px;height:19px;background:#a0a0a0"></div>
<div style="left:1746px;top:1018px;width:1px;height:19px;background:#a0a0a0"></div>
<div style="left:1876px;top:1018px;width:1px;height:19px;background:#a0a0a0"></div>
<svg style="left:1616px;top:1020px" width="15" height="16" viewBox="0 0 15 16"><path d="M4 9L2 15L5 13.5L7 16L8 10ZM11 9L13 15L10 13.5L8 16L7 10Z" fill="#c8401e"/><circle cx="7.5" cy="6.5" r="6" fill="#e0542a"/><circle cx="7.5" cy="6.5" r="3.5" fill="#f07a46"/></svg>
<span class="t" style="left:1635px;top:1021.84px;font-size:12px;color:#000;font-weight:400;letter-spacing:-0.5px">ADR 2019</span>
<svg style="left:1693px;top:1020px" width="16" height="16" viewBox="0 0 16 16"><path d="M6.5 9.5L9.5 6.5" stroke="#2f6db5" stroke-width="1.8"/><rect x="7.5" y="1" width="6" height="9" rx="3" transform="rotate(45 10.5 5.5)" fill="none" stroke="#2f6db5" stroke-width="1.8"/><rect x="2.5" y="6" width="6" height="9" rx="3" transform="rotate(45 5.5 10.5)" fill="none" stroke="#2f6db5" stroke-width="1.8"/></svg>
<span class="t" style="left:1712px;top:1021.84px;font-size:12px;color:#000;font-weight:400;">adrfu</span>
<svg style="left:1748px;top:1020px" width="16" height="16" viewBox="0 0 16 16"><circle cx="8" cy="8" r="7" fill="#fff" stroke="#4a4a4a" stroke-width="1.5"/><path d="M7.5 4V8.5H11.5" fill="none" stroke="#2f6db5" stroke-width="1.2"/></svg>
<span class="t" style="left:1767px;top:1021.84px;font-size:12px;color:#000;font-weight:400;letter-spacing:-0.35px">16/10/2019 08:32:14</span>
<svg style="left:1880px;top:1021px" width="14" height="14" viewBox="0 0 14 14"><circle cx="7.0" cy="7.0" r="7.0" fill="#3a72b5"/><text x="7.0" y="9.85" font-size="7.5" font-family="Liberation Sans" fill="#fff" text-anchor="middle" font-weight="700">IT</text></svg>
<svg style="left:1896px;top:1027px" width="7" height="4" viewBox="0 0 7 4"><path d="M0 0H7L3.5 4Z" fill="#000"/></svg>
</body></html>
